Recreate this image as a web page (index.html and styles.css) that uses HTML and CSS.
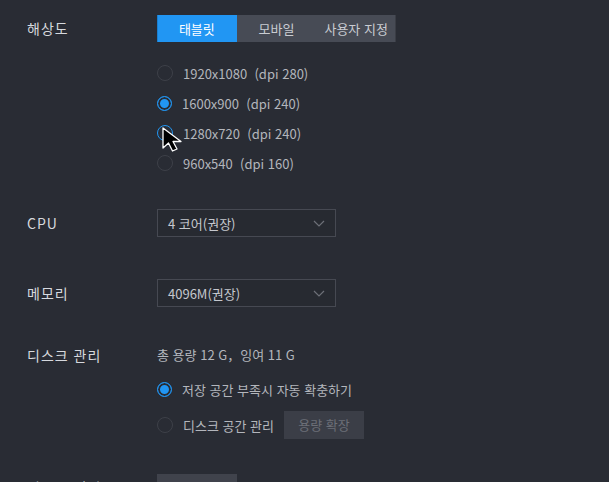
FILE: index.html
```html
<!DOCTYPE html>
<html lang="ko">
<head>
<meta charset="utf-8"/>
<title>설정</title>
<link rel="stylesheet" href="styles.css">
</head>
<body>
<div class="settings">

  <div class="row row-res">
    <div class="label">해상도</div>
    <div class="field">
      <div class="segment">
        <span class="seg-btn active">태블릿</span>
        <span class="seg-btn">모바일</span>
        <span class="seg-btn">사용자 지정</span>
      </div>
      <div class="radio-list">
        <label class="radio"><span class="dot"></span>1920x1080&nbsp; (dpi 280)</label>
        <label class="radio checked"><span class="dot"></span>1600x900&nbsp; (dpi 240)</label>
        <label class="radio hover"><span class="dot"></span>1280x720&nbsp; (dpi 240)</label>
        <label class="radio"><span class="dot"></span>960x540&nbsp; (dpi 160)</label>
      </div>
    </div>
  </div>

  <div class="row row-cpu">
    <div class="label">CPU</div>
    <div class="select">
      <span>4 코어(권장)</span>
      <svg class="chev" width="12" height="7" viewBox="0 0 12 7"><path d="M1 1l5 5 5-5" fill="none" stroke="#6d7078" stroke-width="1.2"/></svg>
    </div>
  </div>

  <div class="row row-mem">
    <div class="label">메모리</div>
    <div class="select">
      <span>4096M(권장)</span>
      <svg class="chev" width="12" height="7" viewBox="0 0 12 7"><path d="M1 1l5 5 5-5" fill="none" stroke="#6d7078" stroke-width="1.2"/></svg>
    </div>
  </div>

  <div class="row row-disk">
    <div class="label">디스크 관리</div>
    <div class="field">
      <div class="disk-info">총 용량 12 G，잉여 11 G</div>
      <label class="radio checked disk-radio"><span class="dot"></span>저장 공간 부족시 자동 확충하기</label>
      <div class="radio disk-radio">
        <span class="dot"></span>디스크 공간 관리
        <span class="btn-expand">용량 확장</span>
      </div>
    </div>
  </div>

  <div class="row row-clean">
    <div class="label">디스크 정리</div>
    <span class="btn-clean"></span>
  </div>

</div>

<svg class="cursor" width="24" height="28" viewBox="0 0 24 28">
  <path d="M2 2 L2 22 L7.5 17 L11.5 25 L16 23 L12 15.5 L20 15.5 Z" fill="#000" stroke="#fff" stroke-width="1.3" stroke-linejoin="round"/>
</svg>
</body>
</html>
```

FILE: styles.css
```css
html, body {
  margin: 0;
  height: 100%;
  overflow: hidden;
}
body {
  background-color: #292c34;
  font-family: "Noto Sans CJK KR", "Noto Sans", sans-serif;
  font-size: 13px;
  color: #d3d6db;
  position: relative;
}
.settings {
  padding: 15px 0 0 27px;
}
.row {
  display: flex;
  align-items: flex-start;
}
.label {
  width: 130px;
  flex-shrink: 0;
  font-size: 14px;
  letter-spacing: 1px;
  line-height: 27px;
  color: #d6d9de;
}
.field {
  display: flex;
  flex-direction: column;
}

/* segmented control */
.segment {
  display: flex;
  width: 239px;
  height: 27px;
  background: #474b55;
  box-shadow: inset -1px 0 0 #3a3d45;
}
.seg-btn {
  flex: 1;
  text-align: center;
  line-height: 27px;
  color: #c9ccd2;
}
.seg-btn.active {
  background: #2196f3;
  color: #fff;
  box-shadow: inset 1px 0 0 #1a7fd0;
}

/* radio buttons */
.radio-list {
  margin-top: 16px;
  display: flex;
  flex-direction: column;
}
.radio {
  display: flex;
  align-items: center;
  height: 30px;
  color: #b3b6bc;
}
.dot {
  width: 14px;
  height: 14px;
  border: 1px solid #3d4048;
  border-radius: 50%;
  margin-right: 10px;
  box-sizing: content-box;
  flex-shrink: 0;
}
.radio.checked .dot {
  border: 1.5px solid #2196f3;
  width: 13px;
  height: 13px;
  background: #2196f3;
  box-shadow: inset 0 0 0 2px #292c34;
}
.radio.hover .dot {
  border-color: #2196f3;
}

/* selects */
.row-cpu {
  margin-top: 31px;
}
.row-cpu .label,
.row-mem .label {
  line-height: 28px;
}
.row-mem {
  margin-top: 42px;
}
.select {
  width: 157px;
  height: 26px;
  padding: 0 10px;
  border: 1px solid #464952;
  background: #272a31;
  display: flex;
  align-items: center;
  justify-content: space-between;
  color: #c5c8ce;
}

/* disk */
.row-disk {
  margin-top: 36px;
}
.row-disk .label {
  line-height: 24px;
}
.disk-info {
  line-height: 24px;
  color: #b3b6bc;
}
.disk-radio {
  height: 36px;
}
.row-disk .field .disk-radio:first-of-type {
  margin-top: 4px;
}
.btn-expand {
  margin-left: 10px;
  width: 80px;
  height: 28px;
  line-height: 28px;
  text-align: center;
  background: #3b3e47;
  color: #6c6f77;
}

.row-clean {
  margin-top: 31px;
}
.btn-clean {
  display: block;
  width: 80px;
  height: 28px;
  background: #40434c;
}

.cursor {
  position: absolute;
  left: 161px;
  top: 126px;
}
```
